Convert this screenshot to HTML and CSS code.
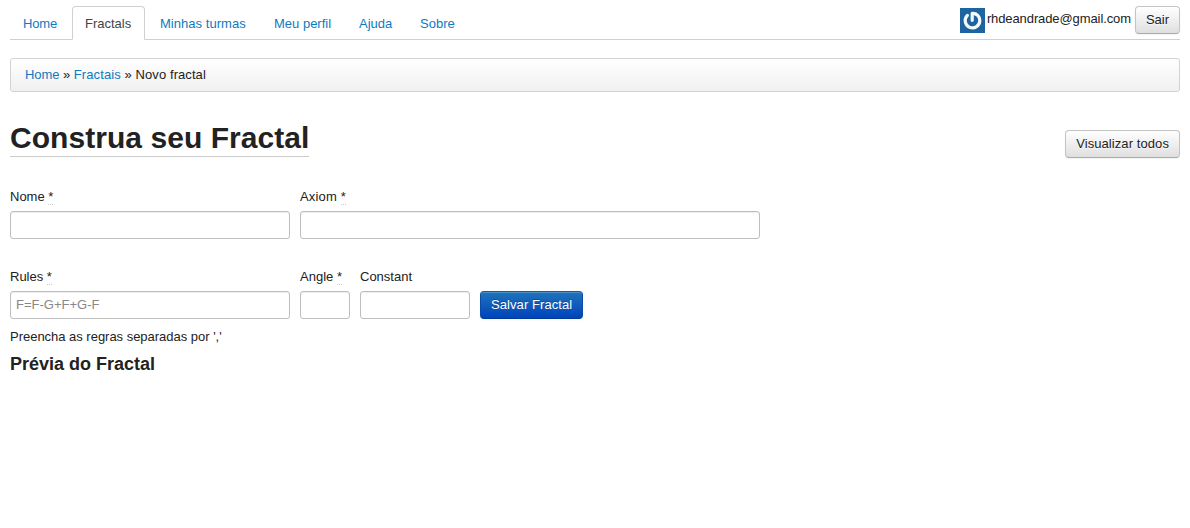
FILE: index.html
```html
<!DOCTYPE html>
<html lang="pt-BR">
<head>
<meta charset="utf-8">
<title>Novo fractal</title>
<link rel="stylesheet" href="styles.css">
</head>
<body>
<header class="topbar">
  <nav class="tabs">
    <a class="tab tab-home" href="#">Home</a>
    <a class="tab tab-fractals active" href="#">Fractals</a>
    <a class="tab tab-classes" href="#">Minhas turmas</a>
    <a class="tab tab-profile" href="#">Meu perfil</a>
    <a class="tab tab-help" href="#">Ajuda</a>
    <a class="tab" href="#">Sobre</a>
  </nav>
  <div class="account">
    <svg class="avatar" viewBox="0 0 25 25" aria-hidden="true">
      <rect width="25" height="25" fill="#1e64a0"/>
      <path d="M12.2 12.3V5.4C16.8 5.1 19.8 8.6 19.8 12.6A7.3 7.3 0 1 1 7.4 7.4" fill="none" stroke="#f4fbfd" stroke-width="3.2" stroke-linecap="round" stroke-linejoin="round"/>
    </svg>
    <span class="email">rhdeandrade@gmail.com</span>
    <button class="btn" type="button">Sair</button>
  </div>
</header>
<div class="breadcrumb"><a class="crumb-home" href="#">Home</a> » <a class="crumb" href="#">Fractais</a> <span class="current">» Novo fractal</span></div>
<div class="page-head">
  <h1 class="title">Construa seu Fractal</h1>
  <button class="btn wide" type="button">Visualizar todos</button>
</div>
<form class="form">
  <div class="row">
    <div class="field w280"><label for="nome">Nome <abbr>*</abbr></label><input id="nome" type="text"></div>
    <div class="field w460"><label class="loose" for="axiom">Axiom <abbr>*</abbr></label><input id="axiom" type="text"></div>
  </div>
  <div class="row">
    <div class="field w280"><label for="rules">Rules <abbr>*</abbr></label><input id="rules" type="text" placeholder="F=F-G+F+G-F"></div>
    <div class="field w50"><label for="angle">Angle <abbr>*</abbr></label><input id="angle" type="text"></div>
    <div class="field w110"><label for="constant">Constant</label><input id="constant" type="text"></div>
    <button class="btn wide primary" type="button">Salvar Fractal</button>
  </div>
</form>
<p class="help">Preencha as regras separadas por ','</p>
<h3 class="preview">Prévia do Fractal</h3>
</body>
</html>
```
FILE: styles.css
```css
* { box-sizing: border-box; }
body {
  margin: 0;
  padding: 6px 10px 0;
  background: #fff;
  color: #222;
  font: 13px/18px "Liberation Sans", Arial, sans-serif;
}
a { color: #0d7bbf; text-decoration: none; }
.topbar {
  display: flex;
  justify-content: space-between;
  align-items: flex-start;
  height: 34px;
  border-bottom: 1px solid #d0d0d0;
}
.tabs { display: flex; gap: 2px; }
.tab {
  height: 34px;
  padding: 8px 12px;
  border: 1px solid transparent;
  border-radius: 4px 4px 0 0;
  white-space: nowrap;
}
.tab-home { width: 60px; letter-spacing: -.15px; }
.tab-fractals { width: 73px; }
.tab-classes { width: 112px; letter-spacing: .04px; }
.tab-profile { width: 83px; }
.tab-help { width: 59px; }
.tab.active {
  color: #444;
  background: #fff;
  border-color: #d0d0d0;
  border-bottom-color: #fff;
}
.account { display: flex; align-items: flex-start; }
.avatar { display: block; width: 25px; height: 25px; margin: 2px 2px 0 0; }
.email { width: 144px; margin: 4px 4px 0 0; letter-spacing: -.1px; white-space: nowrap; }
.btn {
  height: 28px;
  padding: 4px 10px;
  border: 1px solid #c4c4c4;
  border-bottom-color: #aaa;
  border-radius: 4px;
  background: linear-gradient(#fff, #dfdfdf);
  box-shadow: inset 0 1px 0 rgba(255,255,255,.2), 0 1px 2px rgba(0,0,0,.05);
  color: #222;
  font: inherit;
  text-shadow: 0 1px 1px rgba(255,255,255,.75);
}
.wide { letter-spacing: .08px; }
.primary {
  margin-top: 23px;
  border-color: #1a5c93 #0b4ca8 #003a94;
  background: linear-gradient(#1f74ba, #0043bd);
  box-shadow: inset 0 1px 0 rgba(255,255,255,.2), 0 1px 2px rgba(0,0,0,.05);
  color: #fff;
  text-shadow: 0 -1px 0 rgba(0,0,0,.25);
}
.breadcrumb {
  height: 34px;
  margin-top: 18px;
  padding: 7px 14px;
  border: 1px solid #d3d3d3;
  border-radius: 3px;
  background: linear-gradient(#fff, #f0f0f0);
  line-height: 18px;
}
.crumb-home { letter-spacing: -.1px; }
.crumb { letter-spacing: .12px; }
.current { letter-spacing: .08px; }
.page-head {
  display: flex;
  justify-content: space-between;
  align-items: flex-end;
  height: 66px;
}
.title {
  margin: 0 0 1px;
  border-bottom: 1px solid #ccc;
  font-size: 30px;
  line-height: 36px;
  letter-spacing: .05px;
}
.form { margin-top: 30px; }
.row { display: flex; gap: 10px; height: 80px; }
.field label { display: block; height: 23px; white-space: nowrap; }
.field .loose { letter-spacing: .15px; }
.field abbr { border-bottom: 1px dotted #ccc; }
.field input {
  display: block;
  width: 100%;
  height: 28px;
  padding: 3px 5px 5px;
  border: 1px solid #bebebe;
  border-radius: 3px;
  background: #fff;
  box-shadow: inset 0 1px 1px rgba(0,0,0,.075);
  color: #555;
  font: inherit;
}
.field input::placeholder { color: #888; opacity: 1; }
.w280 { width: 280px; }
.w460 { width: 460px; }
.w50 { width: 50px; }
.w110 { width: 110px; }
.help { margin: -20px 0 0; letter-spacing: -.02px; }
.preview { margin: 5px 0 0; font-size: 18px; line-height: 27px; }
```
